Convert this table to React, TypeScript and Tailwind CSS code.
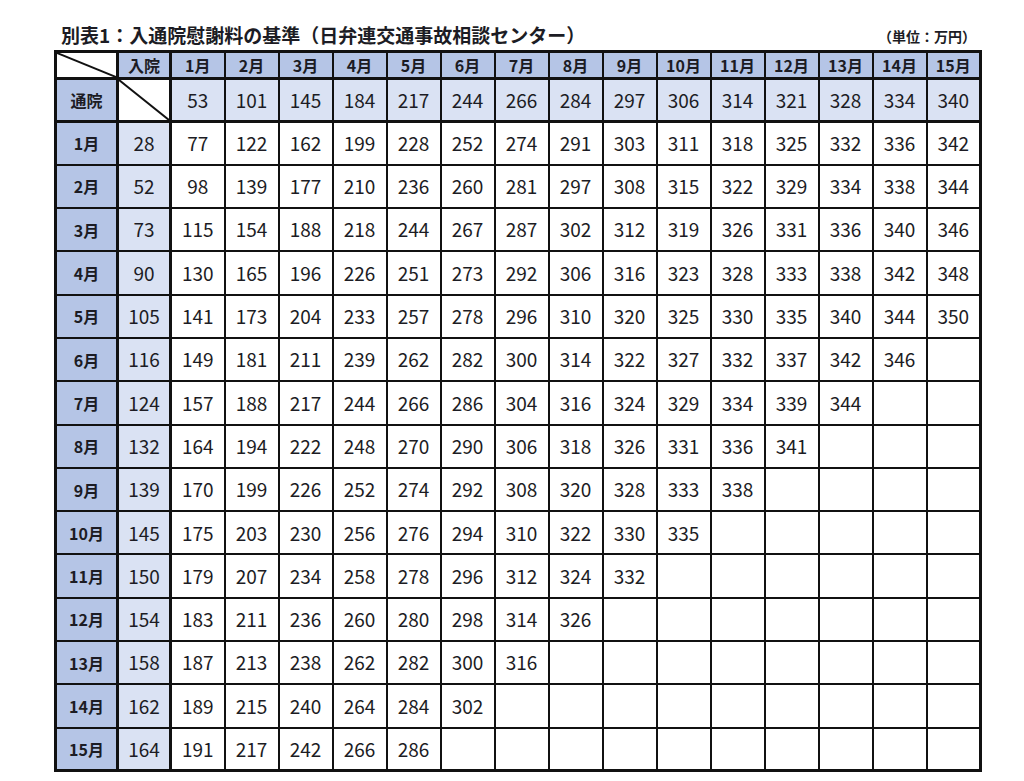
const months = Array.from({ length: 15 }, (_, i) => `${i + 1}月`);

const tsuin = [53, 101, 145, 184, 217, 244, 266, 284, 297, 306, 314, 321, 328, 334, 340];

const rows: { nyuin: number; vals: number[] }[] = [
  { nyuin: 28, vals: [77, 122, 162, 199, 228, 252, 274, 291, 303, 311, 318, 325, 332, 336, 342] },
  { nyuin: 52, vals: [98, 139, 177, 210, 236, 260, 281, 297, 308, 315, 322, 329, 334, 338, 344] },
  { nyuin: 73, vals: [115, 154, 188, 218, 244, 267, 287, 302, 312, 319, 326, 331, 336, 340, 346] },
  { nyuin: 90, vals: [130, 165, 196, 226, 251, 273, 292, 306, 316, 323, 328, 333, 338, 342, 348] },
  { nyuin: 105, vals: [141, 173, 204, 233, 257, 278, 296, 310, 320, 325, 330, 335, 340, 344, 350] },
  { nyuin: 116, vals: [149, 181, 211, 239, 262, 282, 300, 314, 322, 327, 332, 337, 342, 346] },
  { nyuin: 124, vals: [157, 188, 217, 244, 266, 286, 304, 316, 324, 329, 334, 339, 344] },
  { nyuin: 132, vals: [164, 194, 222, 248, 270, 290, 306, 318, 326, 331, 336, 341] },
  { nyuin: 139, vals: [170, 199, 226, 252, 274, 292, 308, 320, 328, 333, 338] },
  { nyuin: 145, vals: [175, 203, 230, 256, 276, 294, 310, 322, 330, 335] },
  { nyuin: 150, vals: [179, 207, 234, 258, 278, 296, 312, 324, 332] },
  { nyuin: 154, vals: [183, 211, 236, 260, 280, 298, 314, 326] },
  { nyuin: 158, vals: [187, 213, 238, 262, 282, 300, 316] },
  { nyuin: 162, vals: [189, 215, 240, 264, 284, 302] },
  { nyuin: 164, vals: [191, 217, 242, 266, 286] },
];

function Diagonal() {
  return (
    <svg className="absolute inset-0 h-full w-full" viewBox="0 0 100 100" preserveAspectRatio="none">
      <line x1="0" y1="0" x2="100" y2="100" stroke="#111" strokeWidth="2" vectorEffect="non-scaling-stroke" />
    </svg>
  );
}

export default function App() {
  const font = { fontFamily: '"Noto Sans CJK JP", "Noto Sans", sans-serif' };
  return (
    <div className="h-[781px] w-[1024px] bg-white text-[#1c1c24]" style={font}>
      <div className="flex items-end justify-between pl-[61px] pr-[48px] pt-[22px]">
        <div className="text-[19px] font-bold leading-[26px]">
          別表1：入通院慰謝料の基準（日弁連交通事故相談センター）
        </div>
        <div className="pb-[3px] text-[14px] font-bold leading-[18px]">（単位：万円）</div>
      </div>
      <table className="ml-[54px] mt-[2px] table-fixed border-collapse border-[3px] border-[#111]">
        <colgroup>
          <col className="w-[62px]" />
          <col className="w-[53px]" />
          {months.map((m) => (
            <col key={m} className="w-[54px]" />
          ))}
        </colgroup>
        <tbody>
          <tr className="h-[27px] bg-[#b5c5e6] text-[16px] font-bold">
            <td className="relative border-[2px] border-b-[3px] border-r-[3px] border-[#111] bg-white p-0">
              <Diagonal />
            </td>
            <td className="border-[2px] border-b-[3px] border-r-[3px] border-[#111] text-center">入院</td>
            {months.map((m) => (
              <td key={m} className="border-[2px] border-b-[3px] border-[#111] text-center leading-[22px]">
                {m}
              </td>
            ))}
          </tr>
          <tr className="h-[43px] bg-[#dae2f3] text-[19px]">
            <td className="border-[2px] border-b-[3px] border-r-[3px] border-[#111] bg-[#b5c5e6] text-center text-[16px] font-bold">
              通院
            </td>
            <td className="relative border-[2px] border-b-[3px] border-r-[3px] border-[#111] bg-white p-0">
              <Diagonal />
            </td>
            {tsuin.map((v, i) => (
              <td key={i} className="border-[2px] border-b-[3px] border-[#111] text-center">
                {v}
              </td>
            ))}
          </tr>
          {rows.map((r, ri) => (
            <tr key={ri} className="h-[43.3px] text-[19px]">
              <td className="border-[2px] border-r-[3px] border-[#111] bg-[#b5c5e6] text-center text-[16px] font-bold">
                {months[ri]}
              </td>
              <td className="border-[2px] border-r-[3px] border-[#111] bg-[#dae2f3] text-center">{r.nyuin}</td>
              {months.map((_, ci) => (
                <td key={ci} className="border-[2px] border-[#111] bg-white text-center">
                  {r.vals[ci] ?? ""}
                </td>
              ))}
            </tr>
          ))}
        </tbody>
      </table>
    </div>
  );
}
